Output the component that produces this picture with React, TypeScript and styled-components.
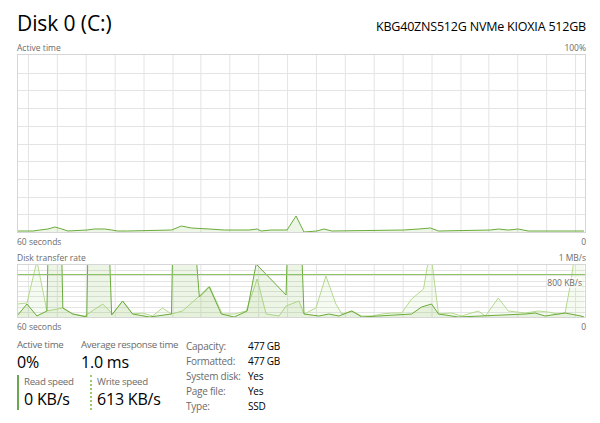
import { Fragment } from "react";
import styled, { createGlobalStyle } from "styled-components";

const GlobalStyle = createGlobalStyle`
  html, body {
    margin: 0;
    padding: 0;
    background: #ffffff;
  }
  body {
    font-family: "Open Sans", "Noto Sans", sans-serif;
    color: #000;
  }
`;

const Page = styled.div`
  width: 600px;
  height: 423px;
  box-sizing: border-box;
  padding: 9px 14px 0 17px;
  display: flex;
  flex-direction: column;
  overflow: hidden;
`;

const Header = styled.div`
  display: flex;
  justify-content: space-between;
  align-items: baseline;
  height: 32px;
`;

const Title = styled.h1`
  margin: 0;
  font-size: 21px;
  font-weight: 400;
  line-height: 28px;
  letter-spacing: -0.1px;
`;

const Model = styled.div`
  font-size: 12.5px;
  letter-spacing: -0.2px;
`;

const AxisRow = styled.div<{ $h: number }>`
  display: flex;
  justify-content: space-between;
  align-items: center;
  height: ${(p) => p.$h}px;
  font-size: 8.5px;
  color: #6b6b6b;
`;

const ChartBox = styled.div<{ $h: number }>`
  position: relative;
  height: ${(p) => p.$h}px;
  box-sizing: border-box;
  border: 1px solid #d6d6d6;
  overflow: hidden;

  svg {
    display: block;
    width: 100%;
    height: 100%;
  }
`;

const InnerLabel = styled.span`
  position: absolute;
  right: 3px;
  top: 12px;
  font-size: 8.5px;
  color: #6b6b6b;
  background: rgba(255, 255, 255, 0.6);
`;

const Stats = styled.div`
  display: flex;
  gap: 9px;
  margin-top: 4px;
`;

const Counters = styled.div`
  display: grid;
  grid-template-columns: 64px 96px;
  grid-template-rows: 34px 38px;
`;

const Counter = styled.div`
  display: flex;
  flex-direction: column;
`;

const SpeedBlock = styled.div<{ $dotted?: boolean }>`
  display: flex;
  flex-direction: column;
  padding-left: 5px;
  margin-left: ${(p) => (p.$dotted ? "9px" : "0")};
  margin-top: 3px;
  border-left: 2px ${(p) => (p.$dotted ? "dotted #9ccc6a" : "solid #6aa84f")};
  height: 35px;
`;

const Label = styled.span`
  font-size: 9.7px;
  line-height: 14px;
  letter-spacing: -0.3px;
  color: #6b6b6b;
  white-space: nowrap;
`;

const Value = styled.span`
  font-size: 16px;
  line-height: 21px;
  letter-spacing: -0.2px;
  color: #000;
  white-space: nowrap;
`;

const Props = styled.dl`
  margin: 0;
  display: grid;
  grid-template-columns: 62px auto;
  grid-auto-rows: 15px;
  align-items: center;
  font-size: 10px;
  letter-spacing: -0.25px;
`;

const PropName = styled.dt`
  color: #6b6b6b;
  white-space: nowrap;
`;

const PropValue = styled.dd`
  margin: 0;
  color: #000;
`;

const W = 569;

function Grid({ h, rows }: { h: number; rows: number }) {
  const lines = [];
  for (let i = 1; i < rows; i++) {
    const y = Math.round((h / rows) * i) + 0.5;
    lines.push(<line key={"h" + i} x1={0} x2={W} y1={y} y2={y} stroke="#e4e4e4" strokeWidth={1} />);
  }
  for (let k = 0; k < 20; k++) {
    const x = Math.round(10 + 28.9 * k) + 0.5;
    lines.push(<line key={"v" + k} x1={x} x2={x} y1={0} y2={h} stroke="#e4e4e4" strokeWidth={1} />);
  }
  return <g>{lines}</g>;
}

type Pt = [number, number];

function toPath(points: Pt[], ox: number, oy: number) {
  return points.map(([x, y]) => `${x - ox},${y - oy}`).join(" ");
}

function Series({ points, ox, oy, h, stroke, fill }: { points: Pt[]; ox: number; oy: number; h: number; stroke: string; fill: string }) {
  const line = toPath(points, ox, oy);
  const first = points[0][0] - ox;
  const last = points[points.length - 1][0] - ox;
  return (
    <g>
      <polygon points={`${first},${h} ${line} ${last},${h}`} fill={fill} />
      <polyline points={line} fill="none" stroke={stroke} strokeWidth={1} strokeLinejoin="round" />
    </g>
  );
}

const activePts: Pt[] = [
  [17, 231], [33, 231], [40, 230], [48, 229], [55, 227], [62, 229], [68, 231], [87, 230], [95, 229], [105, 229],
  [112, 230], [118, 231], [128, 231], [172, 230], [182, 226], [192, 228], [210, 229], [225, 230], [250, 230],
  [258, 229], [262, 231], [272, 230], [288, 230], [297, 216], [305, 232], [318, 231], [325, 229], [333, 231],
  [405, 230], [420, 229], [432, 228], [440, 231], [492, 230], [500, 229], [510, 230], [520, 229], [530, 231], [586, 231],
];

const writePts: Pt[] = [
  [17, 303], [27, 302], [37, 260], [47, 310], [63, 307], [73, 313], [85, 315], [103, 303], [113, 313], [123, 300],
  [133, 313], [143, 312], [153, 315], [163, 307], [172, 313], [183, 310], [200, 295], [210, 285], [223, 313],
  [235, 313], [247, 310], [258, 278], [267, 313], [280, 315], [287, 305], [300, 300], [305, 313], [317, 307],
  [327, 275], [337, 303], [343, 313], [353, 310], [363, 315], [373, 315], [383, 313], [393, 312], [403, 312],
  [413, 298], [425, 288], [430, 258], [433, 258], [440, 313], [453, 312], [463, 315], [480, 310], [487, 315],
  [500, 297], [510, 310], [527, 312], [540, 310], [550, 311], [560, 313], [567, 312], [573, 280], [576, 258], [586, 258],
];

const readPts: Pt[] = [
  [17, 315], [27, 303], [37, 315], [47, 310], [48, 258], [62, 258], [63, 307], [73, 313], [87, 316], [88, 258],
  [110, 258], [112, 314], [123, 300], [133, 313], [150, 316], [172, 313], [173, 258], [197, 258], [200, 296],
  [210, 286], [222, 313], [235, 316], [248, 310], [257, 263], [287, 294], [288, 258], [303, 258], [305, 313],
  [320, 315], [330, 313], [340, 315], [353, 310], [363, 316], [413, 313], [423, 306], [433, 303], [440, 313],
  [460, 316], [527, 313], [537, 312], [547, 315], [567, 312], [583, 315], [586, 316],
];

const props: [string, string][] = [
  ["Capacity:", "477 GB"],
  ["Formatted:", "477 GB"],
  ["System disk:", "Yes"],
  ["Page file:", "Yes"],
  ["Type:", "SSD"],
];

export default function App() {
  return (
    <>
      <GlobalStyle />
      <Page>
        <Header>
          <Title>Disk 0 (C:)</Title>
          <Model>KBG40ZNS512G NVMe KIOXIA 512GB</Model>
        </Header>

        <AxisRow $h={13}>
          <span>Active time</span>
          <span>100%</span>
        </AxisRow>
        <ChartBox $h={179}>
          <svg viewBox={`0 0 ${W} 177`} preserveAspectRatio="none">
            <Grid h={177} rows={10} />
            <Series points={activePts} ox={18} oy={55} h={177} stroke="#6aab3a" fill="rgba(106,171,58,0.12)" />
          </svg>
        </ChartBox>
        <AxisRow $h={17}>
          <span>60 seconds</span>
          <span>0</span>
        </AxisRow>
        <AxisRow $h={14}>
          <span>Disk transfer rate</span>
          <span>1 MB/s</span>
        </AxisRow>
        <ChartBox $h={54}>
          <svg viewBox={`0 0 ${W} 52`} preserveAspectRatio="none">
            <Grid h={52} rows={10} />
            <Series points={writePts} ox={18} oy={264} h={52} stroke="#b5da8e" fill="rgba(181,218,142,0.12)" />
            <Series points={readPts} ox={18} oy={264} h={52} stroke="#6aab3a" fill="rgba(106,171,58,0.12)" />
            <line x1={0} x2={W} y1={9.5} y2={9.5} stroke="#8cc463" strokeWidth={1} />
          </svg>
          <InnerLabel>800 KB/s</InnerLabel>
        </ChartBox>
        <AxisRow $h={16}>
          <span>60 seconds</span>
          <span>0</span>
        </AxisRow>

        <Stats>
          <Counters>
            <Counter>
              <Label>Active time</Label>
              <Value>0%</Value>
            </Counter>
            <Counter>
              <Label>Average response time</Label>
              <Value>1.0 ms</Value>
            </Counter>
            <SpeedBlock>
              <Label>Read speed</Label>
              <Value>0 KB/s</Value>
            </SpeedBlock>
            <SpeedBlock $dotted>
              <Label>Write speed</Label>
              <Value>613 KB/s</Value>
            </SpeedBlock>
          </Counters>
          <Props>
            {props.map(([k, v]) => (
              <Fragment key={k}>
                <PropName>{k}</PropName>
                <PropValue>{v}</PropValue>
              </Fragment>
            ))}
          </Props>
        </Stats>
      </Page>
    </>
  );
}
